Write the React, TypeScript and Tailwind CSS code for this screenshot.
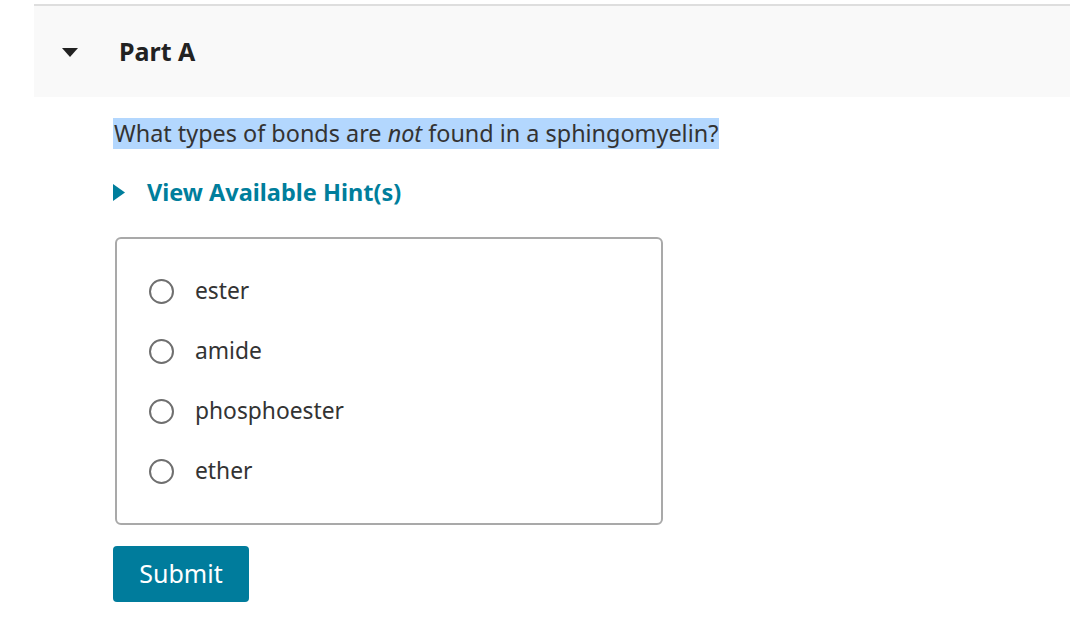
export default function App() {
  const options = ['ester', 'amide', 'phosphoester', 'ether'];

  return (
    <div
      className="w-[1070px] h-[618px] bg-white text-[#333]"
      style={{ fontFamily: '"Noto Sans", "Noto Sans CJK KR", sans-serif' }}
    >
      <div className="pt-[4px] pl-[34px]">
        {/* Part header */}
        <div className="h-[93px] bg-[#f9f9f9] border-t-2 border-[#dedede] flex items-center">
          <svg width="16" height="9" viewBox="0 0 16 9" className="ml-[28px] mt-[2px]">
            <path d="M0 0 H16 L8 9 Z" fill="#222" />
          </svg>
          <h2 className="ml-[41px] text-[25px] font-bold text-[#222] leading-none">Part A</h2>
        </div>

        <div className="pl-[79px]">
          <p className="mt-[21px] inline-block bg-[#b3d7fe] px-[1px] text-[23.4px] leading-[31px] text-[#333]">
            What types of bonds are <em>not</em> found in a sphingomyelin?
          </p>

          <button className="mt-[28px] flex items-center text-[#007e9c] font-bold text-[23.5px] leading-[31px]">
            <svg width="12" height="17" viewBox="0 0 12 17" className="mr-[22px]">
              <path d="M0 0 L12 8.5 L0 17 Z" fill="#007e9c" />
            </svg>
            View Available Hint(s)
          </button>

          <div className="mt-[29px] ml-[2px] w-[548px] h-[288px] border-2 border-[#a9a9a9] rounded-[6px] pt-[22px] pl-[32px]">
            {options.map((o) => (
              <label key={o} className="flex items-center h-[60px]">
                <span className="w-[25px] h-[25px] rounded-full border-2 border-[#6f6f6f] bg-white" />
                <span className="ml-[21px] text-[22.8px] text-[#333]">{o}</span>
              </label>
            ))}
          </div>

          <button className="mt-[21px] w-[136px] h-[56px] bg-[#007c9c] rounded-[4px] text-white text-[25px]">
            Submit
          </button>
        </div>
      </div>
    </div>
  );
}
